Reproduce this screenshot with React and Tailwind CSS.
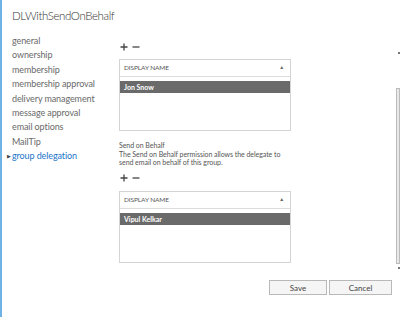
import React from "react";

const navItems = [
  "general",
  "ownership",
  "membership",
  "membership approval",
  "delivery management",
  "message approval",
  "email options",
  "MailTip",
];

const AddRemove = () => (
  <div className="flex items-center gap-[4px] h-[8px] pl-[1px]">
    <svg width="8" height="8" viewBox="0 0 8 8">
      <path d="M4 0.5v7M0.5 4h7" stroke="#444" strokeWidth="1.3" />
    </svg>
    <svg width="8" height="8" viewBox="0 0 8 8">
      <path d="M0.5 4h7" stroke="#444" strokeWidth="1.3" />
    </svg>
  </div>
);

const ListBox = ({ name }) => (
  <div className="border border-[#d4d4d4] h-[72px] w-[172px] bg-white">
    <div className="h-[17px] border-b border-[#dcdcdc] flex items-center justify-between pl-[4px] pr-[6px] text-[6.5px] text-[#555] uppercase tracking-[-0.1px]">
      <span>Display Name</span>
      <span className="text-[5px] text-[#666]">▲</span>
    </div>
    <div className="mt-[4px] h-[12px] bg-[#6a6a6a] text-white font-bold text-[7px] flex items-center pl-[4px]">
      {name}
    </div>
  </div>
);

const App = () => {
  return (
    <div className="w-[400px] h-[317px] bg-white border-l-2 border-[#6fb3e6] flex flex-col overflow-hidden font-['Lato',sans-serif] text-[#333]">
      <div className="h-[34px] pl-[10px] pt-[8px] text-[11.5px] font-light leading-[16px] tracking-[-0.4px] text-[#333] whitespace-nowrap">
        DLWithSendOnBehalf
      </div>
      <div className="flex flex-1">
        <nav className="w-[117px] shrink-0 pl-[10px] text-[9px] leading-[14.4px] tracking-[-0.1px] text-[#6a6a6a] whitespace-nowrap">
          {navItems.map((item) => (
            <div key={item}>{item}</div>
          ))}
          <div className="relative text-[#1a75c9]">
            <span className="absolute -left-[5px] top-[0px] text-[5px] text-[#444]">▶</span>
            group delegation
          </div>
        </nav>
        <main className="pt-[9px] text-[#444]">
          <AddRemove />
          <div className="mt-[8px]">
            <ListBox name="Jon Snow" />
          </div>
          <div className="mt-[10px] text-[7px] leading-[8.7px] tracking-[-0.05px] text-[#555]">
            <div>Send on Behalf</div>
            <div className="w-[168px]">
              The Send on Behalf permission allows the delegate to send email on behalf of this group.
            </div>
          </div>
          <div className="mt-[7px]">
            <AddRemove />
          </div>
          <div className="mt-[9px]">
            <ListBox name="Vipul Kelkar" />
          </div>
        </main>
        <div className="ml-auto w-[4px] flex flex-col items-end pt-[18px] pb-[6px]">
          <div className="w-[2px] h-[2px] bg-[#777]" />
          <div className="mt-[34px] w-[4px] h-[176px] border border-[#bbb] bg-[#e8e8e8]" />
          <div className="mt-[3px] w-[2px] h-[2px] bg-[#777]" />
        </div>
      </div>
      <div className="h-[40px] flex justify-end gap-[2px] pr-[8px] pt-[3px]">
        <button className="w-[58px] h-[15px] border border-[#b9b9b9] bg-[#f5f5f5] text-[8px] text-[#444] leading-none">
          Save
        </button>
        <button className="w-[63px] h-[15px] border border-[#b9b9b9] bg-[#f5f5f5] text-[8px] text-[#444] leading-none">
          Cancel
        </button>
      </div>
    </div>
  );
};

export default App;
